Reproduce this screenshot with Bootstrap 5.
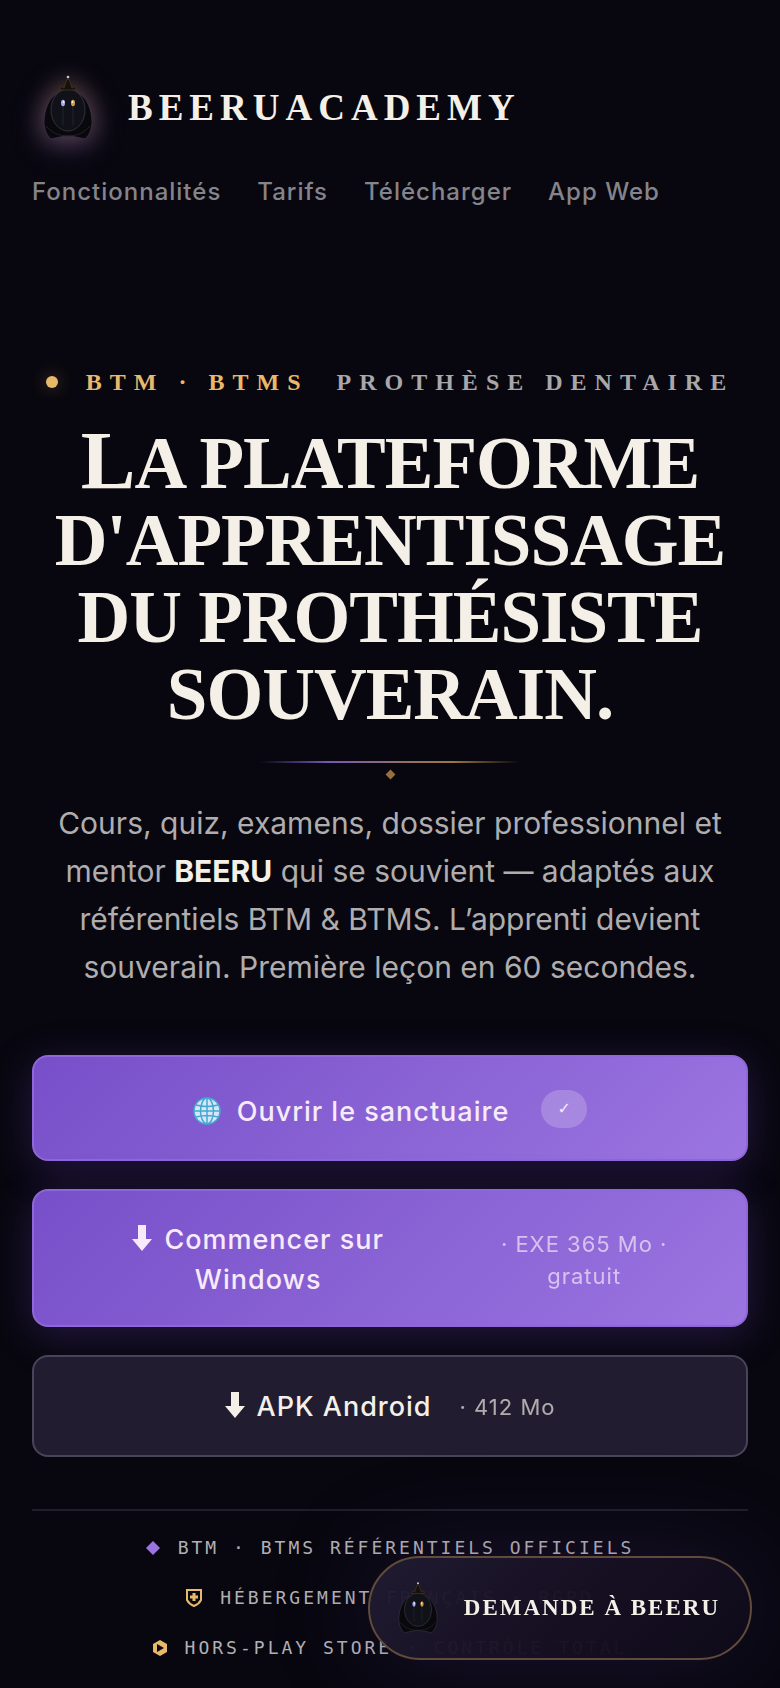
<!DOCTYPE html>
<html lang="fr">
<head>
<meta charset="utf-8">
<meta name="viewport" content="width=device-width, initial-scale=1">
<title>BeeruAcademy</title>
<link href="https://cdn.jsdelivr.net/npm/bootstrap@5.3.0/dist/css/bootstrap.min.css" rel="stylesheet">
<style>
:root{--ink:#08070f;--ivory:#f4f0e8;--gold:#e8b96a;--violet:#9b74e0;--muted:#b7b5b5}
body{background:var(--ink);color:var(--ivory);font-family:"Inter",sans-serif;min-height:100vh}
.page-shell{padding:64px 32px 16px}
.serif-face{font-family:"Liberation Serif",serif;font-weight:700}
.brand-row{gap:24px;color:var(--ivory);text-decoration:none;line-height:88px}
.brand-logo{width:72px;height:88px}
.brand-logo svg{width:50px;height:66px;overflow:visible;filter:drop-shadow(0 -2px 12px rgba(232,170,110,.3)) drop-shadow(0 6px 14px rgba(155,116,224,.35))}
.brand-name{font-size:37px;letter-spacing:6px}
.top-links{gap:12px 36px;margin-top:20px;font-size:24px;line-height:40px;letter-spacing:1px}
.top-links a{color:#85848a;text-decoration:none;font-weight:500}
.hero-block{margin-top:150px}
.eyebrow{gap:28px;font-size:24px;line-height:40px;letter-spacing:8px;color:var(--gold)}
.eyebrow .domain{color:#a9a7aa}
.glow-dot{width:12px;height:12px;border-radius:50%;background:var(--gold);box-shadow:0 0 18px rgba(232,185,106,.4)}
.hero-title{font-size:73px;line-height:77px;letter-spacing:-1px;text-transform:uppercase;margin:20px 0 0}
.hero-title::first-letter{font-size:82px;line-height:77px}
.divider-line{width:260px;height:2px;margin-top:28px;background:linear-gradient(90deg,transparent,#7457b4 26%,#8f6b78 50%,#9b783c 74%,transparent)}
.divider-gem{width:7px;height:7px;margin-top:8px;background:#96703c;transform:rotate(45deg)}
.hero-copy{margin:21px 0 0;padding:0 20px;font-size:30px;line-height:48px;font-weight:400;color:#afadae}
.hero-copy strong{color:var(--ivory);font-weight:700}
.cta-stack{gap:28px;margin-top:64px}
.cta{gap:28px;border:2px solid #8f67da;border-radius:16px;padding:28px 38px 26px;font-size:27px;line-height:40px;letter-spacing:1px;font-weight:500;color:#f7eafa;min-height:102px}
.cta:hover{color:#fff}
.cta-violet{background:linear-gradient(135deg,#774fc9,#9b75e0);box-shadow:0 8px 40px rgba(110,70,200,.28);min-height:106px}
.cta-open{gap:32px;padding:32px 38px 24px}
.cta-split{gap:0;padding:29px 26px 25px 34px}
.cta-dark,.cta-dark:hover{background:#211c30;border-color:#48445a;color:var(--ivory)}
.cta-meta{font-size:22px;line-height:32px;font-weight:400;opacity:.68}
.globe{width:28px;height:28px;margin-right:16px;vertical-align:-4px}
.arrow{width:20px;height:26px;margin-right:12px;vertical-align:-2px}
.check-pill{width:46px;height:38px;margin-bottom:6px;border-radius:19px;background:rgba(255,255,255,.2);font-size:16px;line-height:38px;letter-spacing:0;font-family:"DejaVu Sans",sans-serif}
.proofs{margin-top:52px;padding-top:18px;border-top:2px solid #211e2b;font-family:"DejaVu Sans Mono",monospace;font-size:18px;line-height:38px;letter-spacing:3px;color:#b2b0b3;gap:12px}
.proofs li{gap:18px}
.ask-beeru,.ask-beeru:hover{right:28px;bottom:28px;height:104px;padding:0 30px 0 28px;gap:26px;border:2px solid #604b3c;border-radius:52px;color:var(--ivory);background:linear-gradient(135deg,rgba(32,28,50,.97),rgba(24,16,36,.97) 50%,rgba(14,11,25,.98));box-shadow:0 0 100px rgba(80,50,140,.25);font-size:23px;letter-spacing:2px}
.ask-beeru svg{width:40px;height:54px}
</style>
</head>
<body>
<svg class="d-none" aria-hidden="true">
<symbol id="beeru" viewBox="0 0 50 66">
<path d="M13 19C5 25 1 36 1 47c0 7 3 14 7 17 6-1 11-3 17-3s11 2 17 3c4-3 7-10 7-17 0-11-4-22-12-28z" fill="#08080d" stroke="#3d344a" stroke-width=".8"/>
<ellipse cx="25" cy="35" rx="17" ry="21" fill="#101119" stroke="#3b3a42" stroke-width=".8"/>
<path d="M3 51c6 7 13 10 22 10s16-3 22-10M20 30v20M30 30v20" fill="none" stroke="#292831" stroke-width=".8"/>
<path d="M17 15l1-4 3 2 3-9h2l3 9 3-2 1 4z" fill="#15110d" stroke="#4a371c" stroke-width=".8"/>
<circle cx="25" cy="2" r="1.3" fill="#c8c6d4"/>
<ellipse cx="20" cy="28" rx="2" ry="3.3" fill="#aaa6ea"/><ellipse cx="30" cy="28" rx="2" ry="3.3" fill="#d49c45"/>
<circle cx="20.6" cy="27" r=".9" fill="#fff"/><circle cx="29.4" cy="27" r=".9" fill="#fff"/>
</symbol>
<symbol id="down" viewBox="0 0 20 26"><path d="M6 0h8v14h6L10 26 0 14h6z" fill="currentColor"/></symbol>
</svg>

<div class="page-shell container-fluid">
<header>
<a href="#" class="brand-row d-inline-flex align-items-center">
<span class="brand-logo d-flex align-items-center justify-content-center"><svg aria-hidden="true"><use href="#beeru"/></svg></span>
<span class="brand-name serif-face">BEERUACADEMY</span>
</a>
<nav class="top-links d-flex flex-wrap" aria-label="Navigation principale">
<a href="#fonctionnalites">Fonctionnalités</a><a href="#tarifs">Tarifs</a><a href="#telecharger">Télécharger</a><a href="#app">App Web</a>
</nav>
</header>

<main class="hero-block text-center">
<div class="eyebrow serif-face d-flex align-items-center justify-content-center">
<span class="glow-dot"></span><span>BTM · BTMS</span><span class="domain">PROTHÈSE DENTAIRE</span>
</div>
<h1 class="hero-title serif-face">La plateforme d'apprentissage du prothésiste souverain.</h1>
<div class="divider-line mx-auto"></div>
<div class="divider-gem mx-auto"></div>
<p class="hero-copy">Cours, quiz, examens, dossier professionnel et mentor <strong>BEERU</strong> qui se souvient — adaptés aux référentiels BTM &amp; BTMS. L’apprenti devient souverain. Première leçon en 60 secondes.</p>

<div class="cta-stack d-grid" id="telecharger">
<button type="button" class="btn cta cta-violet cta-open d-flex align-items-center justify-content-center">
<span><svg class="globe" viewBox="0 0 28 28" aria-hidden="true"><circle cx="14" cy="14" r="13" fill="#d9e6fa"/><g fill="none" stroke="#42a9d0" stroke-width="1.5"><circle cx="14" cy="14" r="13"/><ellipse cx="14" cy="14" rx="6.5" ry="13"/><path d="M14 1v26M1 14h26M3 8q11 3 22 0M3 20q11-3 22 0"/></g></svg>Ouvrir le sanctuaire</span><span class="check-pill">✓</span>
</button>
<button type="button" class="btn cta cta-violet cta-split d-flex align-items-center">
<span class="col-7"><svg class="arrow" aria-hidden="true"><use href="#down"/></svg>Commencer sur<br>Windows</span>
<span class="cta-meta col-5">· EXE 365 Mo ·<br>gratuit</span>
</button>
<button type="button" class="btn cta cta-dark d-flex align-items-center justify-content-center">
<span><svg class="arrow" aria-hidden="true"><use href="#down"/></svg>APK Android</span><span class="cta-meta">· 412 Mo</span>
</button>
</div>

<ul class="proofs list-unstyled d-flex flex-column mb-0">
<li class="d-flex align-items-center justify-content-center"><svg width="14" height="14" viewBox="0 0 14 14" aria-hidden="true"><path d="M7 0l7 7-7 7-7-7z" fill="#9b74e0"/></svg><span>BTM · BTMS RÉFÉRENTIELS OFFICIELS</span></li>
<li class="d-flex align-items-center justify-content-center"><svg width="16" height="18" viewBox="0 0 16 18" aria-hidden="true"><path d="M1 1h14v10q-2 4-7 6-5-2-7-6z" fill="none" stroke="#e8b96a" stroke-width="2"/><path d="M8 4v8M4 8h8" stroke="#e8b96a" stroke-width="3"/></svg><span>HÉBERGEMENT FRANÇAIS · RGPD</span></li>
<li class="d-flex align-items-center justify-content-center"><svg width="14" height="16" viewBox="0 0 14 16" aria-hidden="true"><path fill-rule="evenodd" d="M7 0l7 4v8l-7 4-7-4V4zM4 4v8l7-4z" fill="#e8b96a"/></svg><span>HORS-PLAY STORE · CONTRÔLE TOTAL</span></li>
</ul>
</main>
</div>

<button type="button" class="ask-beeru btn serif-face position-fixed d-flex align-items-center"><svg aria-hidden="true"><use href="#beeru"/></svg><span>DEMANDE À BEERU</span></button>
<script src="https://cdn.jsdelivr.net/npm/bootstrap@5.3.0/dist/js/bootstrap.bundle.min.js"></script>
</body>
</html>
